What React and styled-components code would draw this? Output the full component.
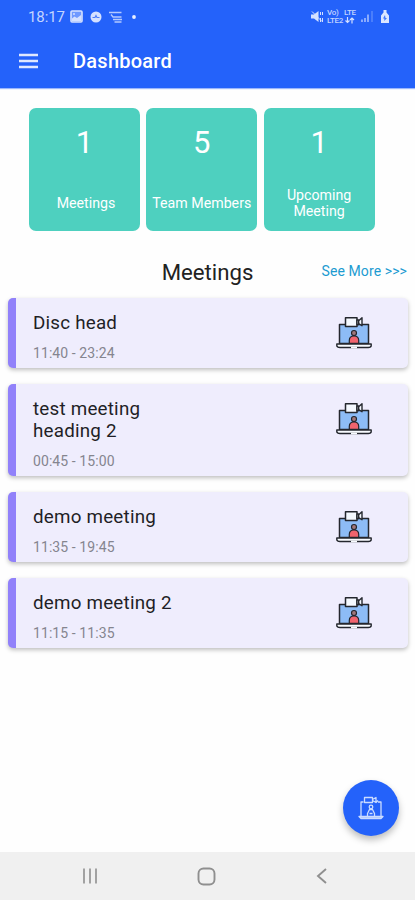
import React from "react";
import styled, { createGlobalStyle } from "styled-components";

const GlobalStyle = createGlobalStyle`
  * { box-sizing: border-box; }
  body { margin: 0; background: #fff; font-family: Roboto, sans-serif; }
`;

const Screen = styled.div`
  position: relative;
  display: flex;
  flex-direction: column;
  width: 415px;
  height: 900px;
  overflow: hidden;
  background: #fefefe;
`;

const Header = styled.header`
  height: 88px;
  flex: none;
  background: #2462fa;
  color: #fff;
  box-shadow: 0 1px 1px rgba(36, 98, 250, 0.45);
`;

const StatusBar = styled.div`
  display: flex;
  align-items: center;
  justify-content: space-between;
  height: 33px;
  padding: 0 25px 0 28px;
  color: #c3d5ff;
`;

const StatusGroup = styled.div`
  display: flex;
  align-items: center;
  gap: ${(p) => p.$gap}px;
`;

const Clock = styled.span`
  width: 37px;
  font-size: 15px;
  line-height: 18px;
  letter-spacing: -0.1px;
  margin-right: -2px;
`;

const Network = styled.span`
  display: grid;
  grid-template-columns: 17px 14px;
  font-size: 8px;
  font-weight: 500;
  line-height: 7.5px;
  letter-spacing: -0.3px;
  white-space: pre;
`;

const BatterySlot = styled.span`
  display: flex;
  margin-left: 3px;
`;

const TitleBar = styled.div`
  display: flex;
  align-items: center;
  height: 56px;
  padding-left: 19px;
  gap: 35px;
`;

const AppTitle = styled.h1`
  margin: 0;
  font-size: 20px;
  font-weight: 500;
  line-height: 24px;
  letter-spacing: 0.25px;
`;

const Stats = styled.section`
  display: grid;
  grid-template-columns: repeat(3, 111px);
  gap: 6.3px;
  margin: 20px 0 0 29px;
`;

const StatCard = styled.div`
  display: flex;
  flex-direction: column;
  align-items: center;
  height: 123px;
  padding-top: 16px;
  border-radius: 7px;
  background: #4ed0bf;
  color: #fff;
`;

const StatValue = styled.div`
  font-size: 31px;
  line-height: 38px;
`;

const StatLabel = styled.div`
  display: flex;
  align-items: center;
  height: 34px;
  margin-top: 24px;
  padding-left: ${(p) => p.$shift || 0}px;
  font-size: 14.2px;
  line-height: 16.5px;
  text-align: center;
  white-space: pre-line;
`;

const SectionHead = styled.div`
  display: grid;
  grid-template-columns: 1fr auto 1fr;
  align-items: center;
  height: 67px;
  padding: 14px 8px 0;
`;

const SectionTitle = styled.h2`
  grid-column: 2;
  margin: 0;
  font-size: 22.2px;
  font-weight: 400;
  line-height: 28px;
  color: #222;
`;

const MoreLink = styled.a`
  justify-self: end;
  margin-top: -1px;
  font-size: 14px;
  line-height: 18px;
  letter-spacing: 0.1px;
  color: #1c9bd1;
`;

const MeetingList = styled.main`
  display: flex;
  flex-direction: column;
  gap: 16px;
  padding: 0 7px 0 8px;
`;

const MeetingCard = styled.article`
  display: flex;
  justify-content: space-between;
  padding: 14px 36px 6px 17px;
  border-left: 8px solid #9181fa;
  border-radius: 5px;
  background: #efedfd;
  box-shadow: 0 2px 4px rgba(0, 0, 0, 0.25);
`;

const MeetingTitle = styled.h3`
  margin: 0;
  font-size: 18.8px;
  font-weight: 400;
  line-height: 22px;
  letter-spacing: 0.22px;
  color: #1f1f26;
  white-space: pre-line;
`;

const MeetingTime = styled.div`
  margin-top: 10px;
  font-size: 14px;
  line-height: 18px;
  letter-spacing: 0.08px;
  color: #85858f;
`;

const IconSlot = styled.div`
  height: 38px;
  margin-top: 4px;
`;

const Fab = styled.button`
  position: absolute;
  right: 16px;
  bottom: 64px;
  display: flex;
  align-items: center;
  justify-content: center;
  width: 56px;
  height: 56px;
  padding: 0;
  border: 0;
  border-radius: 50%;
  background: #2462fa;
  box-shadow: 0 4px 7px rgba(0, 0, 0, 0.26);
`;

const NavBar = styled.nav`
  display: grid;
  grid-template-columns: 20px 19px 16px;
  column-gap: 97px;
  align-items: center;
  height: 48px;
  margin-top: auto;
  padding-left: 80px;
  background: #f0f0f0;
`;

const PictureIcon = () => (
  <svg width="13" height="13" viewBox="0 0 13 13">
    <rect x="1" y="1" width="11" height="11" rx="1" fill="#6f99ff" stroke="#d5e1ff" strokeWidth="1.6" />
    <path d="M2 11V8.500l2.500-2 2.500 1.500 4-3V11Z" fill="#d5e1ff" />
    <circle cx="4" cy="4" r="1" fill="#d5e1ff" />
  </svg>
);

const BadgeIcon = () => (
  <svg width="12" height="12" viewBox="0 0 12 12">
    <circle cx="6" cy="6" r="5.500" fill="#d5e1ff" />
    <path d="M2.500 6.500H5l1-2 1 2h2.500" fill="none" stroke="#4c7efb" strokeWidth="1.200" />
  </svg>
);

const CartIcon = () => (
  <svg width="14" height="12" viewBox="0 0 14 12" fill="none" stroke="#b4caff">
    <path d="M0 1.500h12.500M2 3.500l2 2.500h8.500M4 8.500h9M5.500 11h7" strokeWidth="1.300" />
  </svg>
);

const DotIcon = () => (
  <svg width="8" height="4" viewBox="0 0 8 4">
    <circle cx="4" cy="2" r="1.900" fill="#e8efff" />
  </svg>
);

const MuteIcon = () => (
  <svg width="13" height="14" viewBox="0 0 13 14" fill="none" stroke="#d5e1ff">
    <path d="M0 4.500h3L7.500 1v11L3 8.500H0Z" fill="#d5e1ff" stroke="none" />
    <path d="M1 1.500l10 10M9.500 2v3M11.500 2v3M9.500 8v4M11.500 8v4" strokeWidth="1" />
  </svg>
);

const ArrowsIcon = () => (
  <svg width="11" height="7" viewBox="0 0 11 7" fill="none" stroke="#d5e1ff" strokeWidth="1.200">
    <path d="M3.500 0v5.500M1.500 3.500l2 2 2-2M8 6.500V1M6 3l2-2 2 2" />
  </svg>
);

const SignalIcon = () => (
  <svg width="13" height="13" viewBox="0 0 13 13" strokeWidth="1.300">
    <path d="M1 12V9.500M4 12V8M7 12V4.500" stroke="#c0d2ff" />
    <path d="M11 12V1" stroke="#608efc" />
  </svg>
);

const BatteryIcon = () => (
  <svg width="10" height="13" viewBox="0 0 10 13">
    <path d="M3.500 0h3v2.500l2.500 3V13H1V5.500l2.500-3Z" fill="#dbe6ff" />
    <path d="M5 5L3 8.500h1.300v2.500L7 8H5.500Z" fill="#4277fb" />
  </svg>
);

const MenuIcon = () => (
  <svg width="19" height="16" viewBox="0 0 19 16" stroke="#dfe8ff" strokeWidth="2.300">
    <path d="M0 2h19M0 8h19M0 14h19" />
  </svg>
);

const MeetingIcon = () => (
  <svg width="36" height="34" viewBox="0 0 36 34" fill="none" stroke="#24272e" strokeLinejoin="round">
    <path d="M3.500 8.500h29v19h-29Z" fill="#8dbcf6" strokeWidth="1.500" />
    <path d="M9.500 1.800h11.500v8.700h-11.500Z" fill="#f5f9ff" strokeWidth="1.500" />
    <path d="M21 4v4.500h1.700V4ZM22.700 4.700l3.300-2.900v8l-3.300-2.300Z" fill="#f5f9ff" strokeWidth="1.400" />
    <path d="M13.300 27.300v-2.800q0-4.500 4.700-4.500t4.700 4.500v2.800Z" fill="#f0646e" strokeWidth="1.200" />
    <circle cx="18" cy="17" r="2.500" fill="#a1777b" strokeWidth="1.200" />
    <path d="M.800 28h34.400v1.500q0 2-3 2H4q-3.200 0-3.200-2Z" fill="#f8fbff" strokeWidth="1.400" />
    <path d="M15 31.500h6" stroke="#f8fbff" strokeWidth="1.700" />
  </svg>
);

const FabIcon = () => (
  <svg width="26" height="24" viewBox="0 0 26 24" fill="none" stroke="#cbdcff" strokeWidth="1.300" strokeLinejoin="round">
    <path d="M5.500 6H3V20M20 6h3v14" />
    <path d="M6.500 1.500h8v5h-8ZM14.500 3.500L18 1.500v5l-3.500-2M18 6.500l2-2" />
    <circle cx="13" cy="11" r="1.800" />
    <path d="M9.500 20v-2.500l2-4h3l2 4V20M11.500 17.500h3" />
    <path d="M1 20.500h24l-2 2H3Z" fill="#9dbbff" />
  </svg>
);

const RecentsIcon = () => (
  <svg width="20" height="16" viewBox="0 0 20 16" stroke="#8f8f8f" strokeWidth="1.600">
    <path d="M4 .500v15M10 .500v15M16 .500v15" />
  </svg>
);

const HomeIcon = () => (
  <svg width="19" height="19" viewBox="0 0 19 19">
    <rect x="1.500" y="1.500" width="16" height="16" rx="5" fill="none" stroke="#8f8f8f" strokeWidth="1.900" />
  </svg>
);

const BackIcon = () => (
  <svg width="16" height="16" viewBox="0 0 16 16">
    <path d="M13 1L5 8l8 7" fill="none" stroke="#8f8f8f" strokeWidth="1.900" />
  </svg>
);

const stats = [
  { value: 1, label: "Meetings", shift: 3 },
  { value: 5, label: "Team Members" },
  { value: 1, label: "Upcoming\nMeeting" },
];

const meetings = [
  { title: "Disc head", time: "11:40 - 23:24" },
  { title: "test meeting\nheading 2", time: "00:45 - 15:00" },
  { title: "demo meeting", time: "11:35 - 19:45" },
  { title: "demo meeting 2", time: "11:15 - 11:35" },
];

export default function App() {
  return (
    <>
      <GlobalStyle />
      <Screen>
        <Header>
          <StatusBar>
            <StatusGroup $gap={7}>
              <Clock>18:17</Clock>
              <PictureIcon />
              <BadgeIcon />
              <CartIcon />
              <DotIcon />
            </StatusGroup>
            <StatusGroup $gap={3}>
              <MuteIcon />
              <Network>
                <span>Vo)</span>
                <span>LTE</span>
                <span>LTE2</span>
                <ArrowsIcon />
              </Network>
              <SignalIcon />
              <BatterySlot>
                <BatteryIcon />
              </BatterySlot>
            </StatusGroup>
          </StatusBar>
          <TitleBar>
            <MenuIcon />
            <AppTitle>Dashboard</AppTitle>
          </TitleBar>
        </Header>
        <Stats>
          {stats.map((s) => (
            <StatCard key={s.label}>
              <StatValue>{s.value}</StatValue>
              <StatLabel $shift={s.shift}>{s.label}</StatLabel>
            </StatCard>
          ))}
        </Stats>
        <SectionHead>
          <SectionTitle>Meetings</SectionTitle>
          <MoreLink>See More &gt;&gt;&gt;</MoreLink>
        </SectionHead>
        <MeetingList>
          {meetings.map((m) => (
            <MeetingCard key={m.title}>
              <div>
                <MeetingTitle>{m.title}</MeetingTitle>
                <MeetingTime>{m.time}</MeetingTime>
              </div>
              <IconSlot>
                <MeetingIcon />
              </IconSlot>
            </MeetingCard>
          ))}
        </MeetingList>
        <Fab aria-label="New meeting">
          <FabIcon />
        </Fab>
        <NavBar>
          <RecentsIcon />
          <HomeIcon />
          <BackIcon />
        </NavBar>
      </Screen>
    </>
  );
}
